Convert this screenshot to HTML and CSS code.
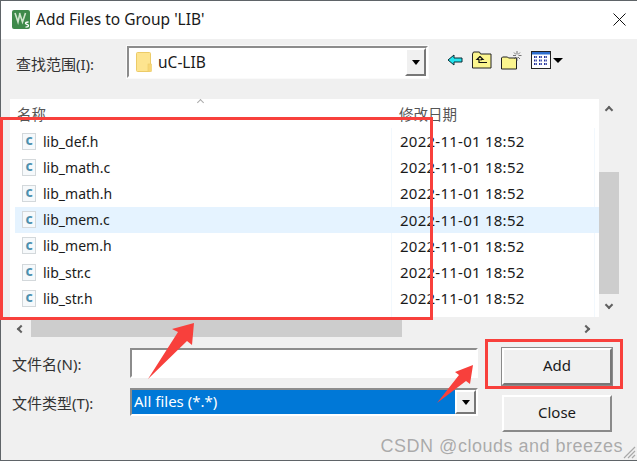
FILE: index.html
```html
<!DOCTYPE html>
<html lang="en">
<head>
    <meta charset="UTF-8">
    <title>Add Files to Group 'LIB'</title>
    <link rel="stylesheet" href="styles.css">
</head>
<body>
    <div class="dialog">
        <div class="titlebar">
            <svg class="app-icon" width="18" height="19" viewBox="0 0 18 19">
                <rect x="0" y="0" width="18" height="19" rx="2" fill="#3f8a4a"/>
                <path d="M3 3l3 9 2-9M7.500 3l3 9 3-9" fill="none" stroke="#cfe6cc" stroke-width="1.600"/>
                <path d="M16.500 12c-2 0-3 .4-3 1.400s3 1 3 2.200-1.200 1.600-3 1.600" fill="none" stroke="#fff" stroke-width="1.300"/>
            </svg>
            <span class="title">Add Files to Group 'LIB'</span>
            <svg class="close-x" width="13" height="13" viewBox="0 0 13 13">
                <path d="M.5.5l12 12M12.500.5l-12 12" stroke="#111" stroke-width="1" fill="none"/>
            </svg>
        </div>

        <div class="look-row">
            <span class="field-label look-label">查找范围(I):</span>
            <div class="combo look-combo">
                <svg class="folder" width="16" height="20" viewBox="0 0 16 20">
                    <rect x="0.500" y="0.500" width="14" height="19" rx="1" fill="#fde48f" stroke="#eccb68"/>
                    <rect x="12" y="12" width="3.500" height="7.500" fill="#f8d675" stroke="#eccb68" stroke-width=".6"/>
                </svg>
                <span class="combo-text">uC-LIB</span>
                <span class="combo-btn"><i class="tri"></i></span>
            </div>
            <div class="tools">
                <svg width="16" height="14" viewBox="0 0 16 14">
                    <path d="M7 2v3h8v4H7v3L1 7z" fill="#22e4ee" stroke="#0b2b33" stroke-width="1"/>
                </svg>
                <svg width="20" height="18" viewBox="0 0 20 18">
                    <path d="M.5 17V3l1-2h6l1 2h10.500v14z" fill="#fbf58e" stroke="#222" stroke-width="1"/>
                    <path d="M8 5.500L5 8.500h2v3h8M8 5.500l3 3H9v1" fill="none" stroke="#111" stroke-width="1.200"/>
                </svg>
                <svg width="21" height="20" viewBox="0 0 21 20">
                    <path d="M.5 19V8l1-1h5l1 1h8v11z" fill="#fbf58e" stroke="#222" stroke-width="1"/>
                    <path d="M16 1v3M16 7v4M12 5.500h3M17.500 5.500h3M13 2.500l2 2M19 2.500l-2 2M13 9l2-2M19 9l-2-2" stroke="#555" stroke-width=".8" fill="none"/>
                </svg>
                <div class="view-btn">
                    <svg width="20" height="18" viewBox="0 0 20 18">
                        <rect x=".5" y=".5" width="19" height="17" fill="#fff" stroke="#222"/>
                        <rect x="1" y="1" width="18" height="2.500" fill="#2f6fd0"/>
                        <path d="M3 6h3M8 6h3M13 6h3M3 9.500h3M8 9.500h3M13 9.500h3M3 13h3M8 13h3M13 13h3" stroke="#22329c" stroke-width="2" stroke-dasharray="1.500 .7" fill="none"/>
                    </svg>
                    <i class="tri tri-wide"></i>
                </div>
            </div>
        </div>

        <div class="browser">
            <div class="browser-main">
                <div class="list">
                    <div class="list-head">
                        <span class="col-name">名称</span>
                        <span class="sort-mark"></span>
                        <span class="col-date">修改日期</span>
                    </div>
                    <div class="rows" id="rows"></div>
                </div>
                <div class="vscroll">
                    <span class="chev chev-up"></span>
                    <div class="vtrack"><div class="vthumb"></div></div>
                    <span class="chev chev-down"></span>
                </div>
            </div>
            <div class="hscroll">
                <span class="chev chev-left"></span>
                <div class="hthumb"></div>
                <span class="chev chev-right"></span>
            </div>
        </div>

        <div class="form">
            <div class="form-fields">
                <div class="form-row">
                    <span class="field-label">文件名(N):</span>
                    <div class="sunken name-input"></div>
                </div>
                <div class="form-row type-row">
                    <span class="field-label">文件类型(T):</span>
                    <div class="combo type-combo">
                        <span class="type-value">All files (*.*)</span>
                        <span class="combo-btn type-btn"><i class="tri"></i></span>
                    </div>
                </div>
            </div>
            <div class="form-buttons">
                <div class="btn btn-default">Add</div>
                <div class="btn">Close</div>
            </div>
        </div>

        <span class="watermark">CSDN @clouds and breezes</span>
        <svg class="grip" width="14" height="14" viewBox="0 0 14 14">
            <path d="M13 2L2 13M13 6l-7 7M13 10l-3 3" stroke="#a9a9a9" stroke-width="1.200" fill="none"/>
        </svg>

        <!-- red annotations drawn on top of the dialog -->
        <div class="mark mark-list"></div>
        <div class="mark mark-add"></div>
        <svg class="arrows" width="637" height="461" viewBox="0 0 637 461">
            <path d="M148 379L178 332 172 329 194 323 192 345 187 341z" fill="#f8403c"/>
            <path d="M437 403L459 375 455 372 473 365 470 384 466 381z" fill="#f8403c"/>
        </svg>
    </div>
    <script>
        const files = ['lib_def.h', 'lib_math.c', 'lib_math.h', 'lib_mem.c', 'lib_mem.h', 'lib_str.c', 'lib_str.h'];
        const rows = document.getElementById('rows');

        files.forEach((name) => {
            const row = document.createElement('div');
            row.className = name === 'lib_mem.c' ? 'row row-hover' : 'row';
            row.innerHTML = `
                <span class="file-icon">c</span>
                <span class="file-name">${name}</span>
                <span class="file-date">2022-11-01 18:52</span>
            `;
            rows.appendChild(row);
        });
    </script>
</body>
</html>
```

FILE: styles.css
```css
* {
    box-sizing: border-box;
}

body {
    margin: 0;
    width: 637px;
    height: 461px;
    overflow: hidden;
    font-family: "Noto Sans", "Noto Sans CJK SC", sans-serif;
    color: #1a1a1a;
}

.dialog {
    position: relative;
    width: 637px;
    height: 461px;
    background-color: #f0f0f0;
    border: 1px solid #5f6468;
    border-right: none;
}

.titlebar {
    display: flex;
    align-items: center;
    height: 38px;
    padding: 0 11px 2px 11px;
    background-color: white;
}

.title {
    margin-left: 6px;
    font-size: 15.500px;
    flex-grow: 1;
}

.look-row {
    display: flex;
    align-items: center;
    height: 40px;
    margin-top: 3px;
    padding-left: 15px;
}

.field-label {
    font-size: 15px;
    color: #333;
    white-space: nowrap;
}

.look-label {
    width: 111px;
    padding-top: 3px;
}

.combo {
    display: flex;
    align-items: center;
    background-color: white;
    border: 2px solid;
    border-color: #8c8c8c #fff #fff #8c8c8c;
}

.look-combo {
    width: 301px;
    height: 32px;
    padding-left: 7px;
    outline: 1px solid #fafafa;
}

.combo-text {
    margin-left: 6px;
    font-size: 15.500px;
    flex-grow: 1;
}

.combo-btn {
    display: flex;
    align-items: center;
    justify-content: center;
    width: 21px;
    height: 100%;
    background-color: #f0f0f0;
    border: 2px solid;
    border-color: #fff #777 #777 #fff;
}

.tri {
    display: block;
    border-style: solid;
    border-width: 5px 4.500px 0;
    border-color: #000 transparent transparent;
}

.tri-wide {
    border-width: 5px 5.500px 0;
}

.tools {
    display: flex;
    align-items: center;
    gap: 9px;
    margin-left: 19px;
    padding-bottom: 4px;
}

.view-btn {
    display: flex;
    align-items: center;
    gap: 2px;
}

.browser {
    margin: 17px 17px 0 9px;
}

.browser-main {
    display: flex;
}

.list {
    width: 589px;
    height: 218px;
    background-color: white;
}

.list-head {
    position: relative;
    display: flex;
    height: 29px;
    padding-top: 4px;
    font-size: 14.500px;
    color: #555;
}

.col-name {
    margin-left: 7px;
    width: 374px;
}

.sort-mark {
    position: absolute;
    left: 188px;
    top: 1px;
    width: 5px;
    height: 5px;
    border-top: 1px solid #aaa;
    border-left: 1px solid #aaa;
    transform: rotate(45deg);
}

.col-date {
    margin-left: 8px;
}

.rows {
    height: 189px;
    background-image: linear-gradient(#f2f8fd, #f2f8fd), linear-gradient(#f2f8fd, #f2f8fd);
    background-repeat: no-repeat;
    background-size: 1px 100%;
    background-position: 381px 0, 584px 0;
}

.row {
    display: flex;
    align-items: center;
    height: 26.200px;
    margin-left: 5px;
    width: 584px;
    font-size: 14px;
}

.row-hover {
    background-color: #e5f3ff;
}

.file-icon {
    display: flex;
    align-items: center;
    justify-content: center;
    width: 14px;
    height: 17px;
    margin-left: 7px;
    padding-bottom: 2px;
    background-color: #f6f9fb;
    border: 1px solid #d3d8db;
    font-size: 14px;
    font-weight: 700;
    line-height: 1;
    color: #4c90ae;
}

.file-name {
    margin-left: 7px;
    width: 350px;
}

.file-date {
    margin-left: 7px;
    font-size: 15px;
    letter-spacing: 0.250px;
}

.vscroll {
    display: flex;
    flex-direction: column;
    align-items: center;
    width: 20px;
    height: 218px;
}

.vtrack {
    flex-grow: 1;
    width: 100%;
    padding-top: 59px;
}

.vthumb {
    height: 122px;
    background-color: #cdcdcd;
}

.chev {
    display: block;
    flex-shrink: 0;
    width: 6px;
    height: 6px;
    border-top: 2px solid #606060;
    border-left: 2px solid #606060;
}

.chev-up {
    margin: 8px 0 0;
    transform: rotate(45deg);
}

.chev-down {
    margin: 0 0 9px;
    transform: rotate(225deg);
}

.chev-left {
    margin-left: 8px;
    transform: rotate(-45deg);
}

.chev-right {
    margin-left: 181px;
    transform: rotate(135deg);
}

.hscroll {
    display: flex;
    align-items: center;
    height: 17px;
    margin-top: 3px;
}

.hthumb {
    width: 371px;
    height: 100%;
    margin-left: 7px;
    background-color: #cdcdcd;
}

.form {
    display: flex;
    margin-top: 11px;
    padding-left: 11px;
}

.form-fields {
    display: flex;
    flex-direction: column;
    gap: 10px;
    width: 490px;
}

.form-row {
    display: flex;
    align-items: center;
    height: 30px;
}

.form-row .field-label {
    width: 118px;
}

.type-row {
    height: 28px;
}

.sunken {
    background-color: white;
    border: 2px solid;
    border-color: #8c8c8c #fff #fff #8c8c8c;
}

.name-input {
    width: 348px;
    height: 30px;
}

.type-combo {
    width: 348px;
    height: 28px;
}

.type-value {
    flex-grow: 1;
    height: 100%;
    padding-left: 2px;
    background-color: #0078d7;
    color: white;
    font-size: 15px;
    line-height: 23px;
}

.form-buttons {
    display: flex;
    flex-direction: column;
    gap: 10px;
}

.btn {
    display: flex;
    align-items: center;
    justify-content: center;
    width: 110px;
    height: 37px;
    padding-bottom: 3px;
    font-size: 15px;
    background-color: #f0f0f0;
    border: 2px solid;
    border-color: #fff #8a8a8a #8a8a8a #fff;
}

.btn-default {
    outline: 1px solid #8a8a8a;
    border-color: #fff #777 #777 #fff;
}

.watermark {
    position: absolute;
    right: 14px;
    bottom: 3px;
    font-family: "Liberation Sans", sans-serif;
    font-size: 18px;
    letter-spacing: 0.500px;
    color: rgba(110, 110, 110, 0.55);
}

.grip {
    position: absolute;
    right: 1px;
    bottom: 1px;
}

.mark {
    position: absolute;
    border: 3px solid #f8403c;
}

.mark-list {
    left: -1px;
    top: 116px;
    width: 433px;
    height: 203px;
}

.mark-add {
    left: 484px;
    top: 338px;
    width: 138px;
    height: 50px;
}

.arrows {
    position: absolute;
    left: -1px;
    top: -1px;
}
```
